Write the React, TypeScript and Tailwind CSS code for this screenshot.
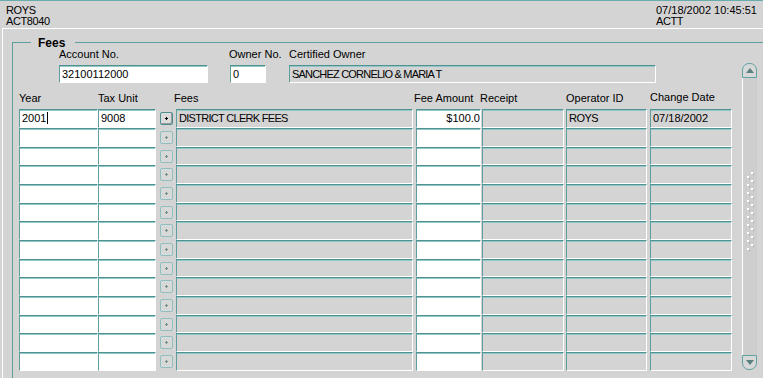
import React from "react";

const TEAL = "border-[#5f9e9e]";

type FieldProps = {
  w: string;
  white?: boolean;
  right?: boolean;
  children?: React.ReactNode;
  extra?: string;
};

function Field({ w, white, right, children, extra }: FieldProps) {
  return (
    <div
      className={[
        "h-full shrink-0 border border-t-[#4f9292] border-l-[#5f9e9e] border-r-white border-b-white shadow-[inset_0_1px_0_#93c6c6] overflow-hidden whitespace-nowrap leading-[16px] px-[2px]",
        white ? "bg-white" : "bg-[#d4d4d4]",
        right ? "text-right pr-0" : "",
        w,
        extra ?? "",
      ].join(" ")}
    >
      {children}
    </div>
  );
}

function PlusButton({ active }: { active?: boolean }) {
  return (
    <div className="w-[20px] h-full shrink-0 flex items-center">
      <div
        className={[
          "ml-[4px] w-[13px] h-[13px] rounded-[2px] border flex items-center justify-center",
          active
            ? "border-[#4f8f8f] bg-[#dcdcdc] shadow-[inset_-1px_-1px_0_#9a9a9a]"
            : "border-[#8fc0c0] bg-[#d8d8d8]",
        ].join(" ")}
      >
        <svg width="5" height="5" viewBox="0 0 5 5">
          <rect x="2" y="1" width="1" height="3" fill={active ? "#000" : "#6f8f8f"} />
          <rect x="1" y="2" width="3" height="1" fill={active ? "#000" : "#6f8f8f"} />
        </svg>
      </div>
    </div>
  );
}

type Row = {
  year?: string;
  tax?: string;
  fees?: string;
  amount?: string;
  op?: string;
  date?: string;
};

const rows: Row[] = [
  { year: "2001", tax: "9008", fees: "DISTRICT CLERK FEES", amount: "$100.0", op: "ROYS", date: "07/18/2002" },
  ...Array.from({ length: 13 }, () => ({})),
];

function GripDots() {
  const dots: React.ReactNode[] = [];
  for (let i = 0; i < 10; i++) {
    const y = i * 8;
    dots.push(
      <g key={i}>
        <rect x="1" y={y + 4} width="2" height="2" fill="#ffffff" />
        <rect x="3" y={y + 6} width="1" height="1" fill="#7fb3b3" />
        <rect x="5" y={y} width="2" height="2" fill="#ffffff" />
        <rect x="7" y={y + 2} width="1" height="1" fill="#7fb3b3" />
      </g>
    );
  }
  return (
    <svg width="9" height="80" viewBox="0 0 9 80">
      {dots}
    </svg>
  );
}

function ScrollBar() {
  return (
    <div className="mt-[20px] w-[15px] h-[307px] flex flex-col shrink-0">
      <div className="h-[15px] rounded-t-[7px] border border-[#5fa4a4] bg-[#d8d8d8] flex items-center justify-center">
        <svg width="8" height="5" viewBox="0 0 8 5">
          <polygon points="4,0 8,5 0,5" fill="#5c7f7f" />
        </svg>
      </div>
      <div className="flex-1 border-l border-white bg-[#cecece] flex flex-col items-center pt-[94px]">
        <GripDots />
      </div>
      <div className="h-[15px] rounded-b-[7px] border border-[#5fa4a4] bg-[#d8d8d8] flex items-center justify-center">
        <svg width="8" height="5" viewBox="0 0 8 5">
          <polygon points="0,0 8,0 4,5" fill="#5c7f7f" />
        </svg>
      </div>
    </div>
  );
}

export default function App() {
  return (
    <div
      className="w-[763px] h-[378px] bg-[#d4d4d4] text-black text-[11px] overflow-hidden flex flex-col"
      style={{ fontFamily: '"Liberation Sans", Arial, sans-serif' }}
    >
      {/* header */}
      <div className="h-[28px] shrink-0 border-t border-[#6aacac] flex leading-[11px] pt-[4px]">
        <div className="pl-[6px] flex-1 tracking-[-0.4px]">
          <div>ROYS</div>
          <div>ACT8040</div>
        </div>
        <div className="w-[107px]">
          <div>07/18/2002 10:45:51</div>
          <div className="tracking-[-0.4px]">ACTT</div>
        </div>
      </div>

      {/* main panel */}
      <div className="flex-1 ml-[2px] border-t border-l border-white flex flex-col">
        <div className={`relative mt-[13px] ml-[9px] flex-1 border-t border-l ${TEAL} flex`}>
          <div className="absolute left-[18px] top-[-7px] bg-[#d4d4d4] pl-[7px] pr-[10px] text-[12px] font-bold leading-[14px]">
            Fees
          </div>

          {/* form area */}
          <div className="w-[729px] shrink-0 flex flex-col pt-[5px]">
            {/* top labels */}
            <div className="flex h-[13px] leading-[13px]">
              <div className="ml-[46px] w-[170px]">Account No.</div>
              <div className="w-[60px]">Owner No.</div>
              <div>Certified Owner</div>
            </div>
            <div className="flex h-[18px] mt-[4px]">
              <div className="ml-[46px]">
                <Field w="w-[149px]" white>
                  32100112000
                </Field>
              </div>
              <div className="ml-[22px]">
                <Field w="w-[36px]" white>
                  0
                </Field>
              </div>
              <div className="ml-[23px]">
                <Field w="w-[367px]" extra="tracking-[-0.8px]">
                  SANCHEZ CORNELIO &amp; MARIA T
                </Field>
              </div>
            </div>

            {/* column headers */}
            <div className="flex h-[13px] leading-[13px] mt-[9px]">
              <div className="ml-[6px] w-[79px]">Year</div>
              <div className="w-[78px]">Tax Unit</div>
              <div className="w-[238px] -ml-[2px]">Fees</div>
              <div className="w-[66px] ml-[2px]">Fee Amount</div>
              <div className="w-[86px]">Receipt</div>
              <div className="w-[84px]">Operator ID</div>
              <div className="-mt-[1px]">Change Date</div>
            </div>

            {/* rows */}
            <div className="mt-[4px] flex flex-col">
              {rows.map((r, i) => (
                <div key={i} className={i % 3 === 2 ? "flex h-[18px]" : "flex h-[19px]"}>
                  <div className="ml-[6px] h-full">
                    <Field w="w-[79px]" white>
                      {r.year}
                      {i === 0 && <span className="inline-block w-px h-[12px] bg-black ml-[1px] align-[-2px]" />}
                    </Field>
                  </div>
                  <Field w="w-[58px]" white>
                    {r.tax}
                  </Field>
                  <PlusButton active={i === 0} />
                  <Field w="w-[237px]" extra="tracking-[-0.7px]">
                    {r.fees}
                  </Field>
                  <div className="ml-[3px] h-full">
                    <Field w="w-[65px]" white right>
                      {r.amount}
                    </Field>
                  </div>
                  <div className="ml-[1px] h-full">
                    <Field w="w-[82px]" />
                  </div>
                  <div className="ml-[2px] h-full">
                    <Field w="w-[81px]" extra="tracking-[-0.5px]">
                      {r.op}
                    </Field>
                  </div>
                  <div className="ml-[3px] h-full">
                    <Field w="w-[82px]">{r.date}</Field>
                  </div>
                </div>
              ))}
            </div>
          </div>

          <ScrollBar />
        </div>
      </div>
    </div>
  );
}
